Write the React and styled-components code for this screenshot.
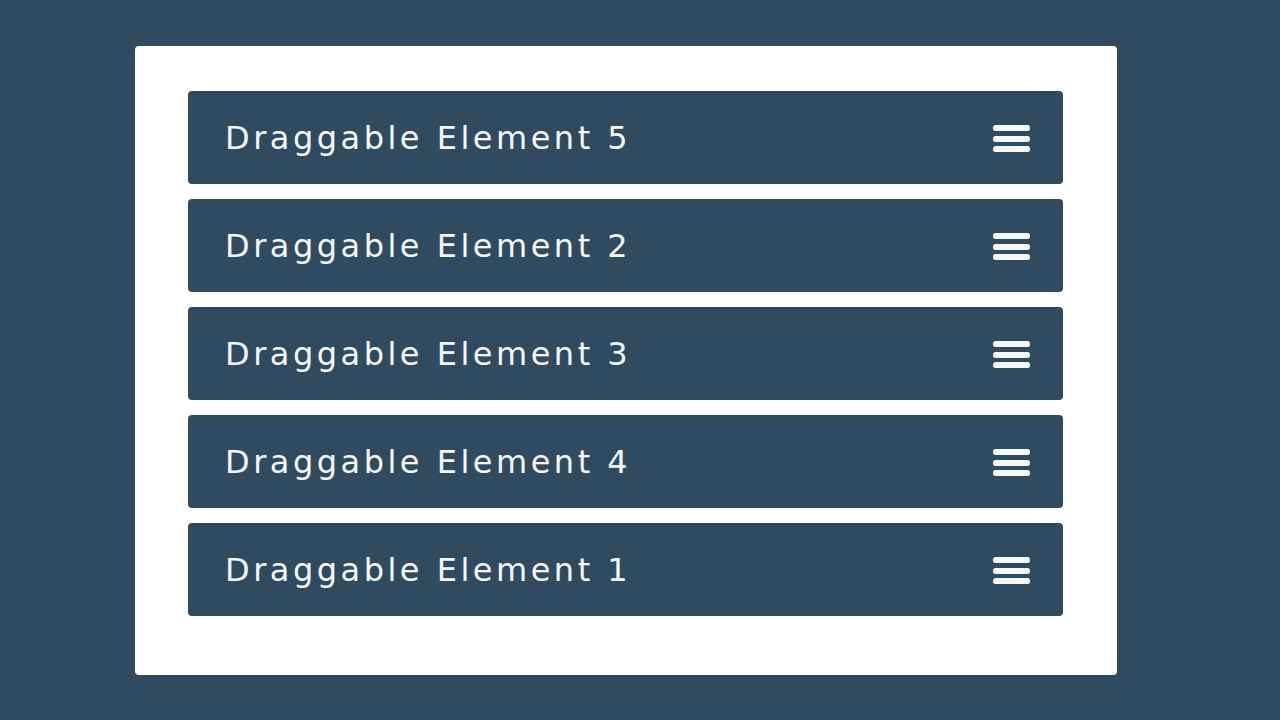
import styled, { createGlobalStyle } from "styled-components";

const GlobalStyle = createGlobalStyle`
  html, body {
    margin: 0;
    padding: 0;
    background: #304b60;
    font-family: "DejaVu Sans", "Open Sans", sans-serif;
  }
`;

const Page = styled.div`
  width: 1280px;
  height: 720px;
  padding-top: 46px;
  box-sizing: border-box;
  display: flex;
  justify-content: flex-start;
`;

const Card = styled.div`
  margin-left: 135px;
  width: 982px;
  height: 629px;
  box-sizing: border-box;
  background: #ffffff;
  border-radius: 4px;
  padding: 45px 54px 0 53px;
  display: flex;
  flex-direction: column;
  gap: 15px;
`;

const Item = styled.div`
  height: 93px;
  background: #304b60;
  border-radius: 4px;
  display: flex;
  align-items: center;
  justify-content: space-between;
  padding: 0 33px 0 37px;
  color: #f4f6f8;
  cursor: grab;
`;

const Label = styled.span`
  font-size: 32px;
  font-weight: 400;
  letter-spacing: 3.5px;
  line-height: 1;
  margin-top: 1px;
`;

const Handle = styled.svg`
  display: block;
  margin-top: 2px;
`;

const Bars = () => (
  <Handle width="37" height="28" viewBox="0 0 37 28">
    <rect x="0" y="0" width="37" height="6" rx="2.5" fill="#f4f6f8" />
    <rect x="0" y="11" width="37" height="6" rx="2.5" fill="#f4f6f8" />
    <rect x="0" y="21" width="37" height="6" rx="2.5" fill="#f4f6f8" />
  </Handle>
);

const items = [5, 2, 3, 4, 1];

export default function App() {
  return (
    <>
      <GlobalStyle />
      <Page>
        <Card>
          {items.map((n) => (
            <Item key={n}>
              <Label>Draggable Element {n}</Label>
              <Bars />
            </Item>
          ))}
        </Card>
      </Page>
    </>
  );
}
